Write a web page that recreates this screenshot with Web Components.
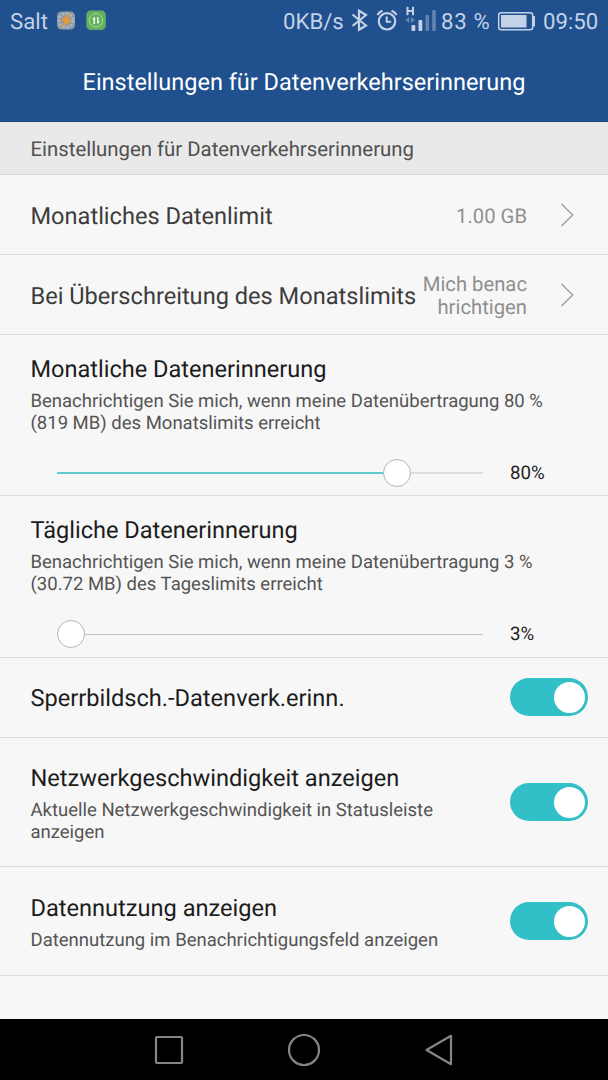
<!doctype html>
<html lang="de">
<head>
  <meta charset="UTF-8">
  <meta name="viewport" content="width=device-width, initial-scale=1.0">
  <title>Einstellungen für Datenverkehrserinnerung</title>
  <style>
    body {
      margin: 0;
      background: #f7f7f7;
      font-family: Roboto, "Liberation Sans", sans-serif;
      text-rendering: geometricPrecision;
    }
  </style>
</head>
<body>
<template id="settings-screen">
  <style>
    :host {
      display: flex;
      flex-direction: column;
      height: 1080px;
      overflow: hidden;
    }
    header {
      box-sizing: border-box;
      height: 122px;
      background: #20508e;
      border-bottom: 1px solid #174682;
    }
    main {
      flex: 1;
    }
  </style>
  <header><slot name="header"></slot></header>
  <main><slot></slot></main>
  <slot name="nav"></slot>
</template>

<template id="status-bar">
  <style>
    :host {
      display: flex;
      box-sizing: border-box;
      height: 42px;
      padding: 0 10px;
      align-items: center;
      justify-content: space-between;
      color: #c3d2e6;
      font-size: 22.2px;
      line-height: 42px;
      white-space: nowrap;
    }
    div {
      display: flex;
      align-items: center;
    }
    span {
      padding-top: 2px;
    }
    svg {
      display: block;
      flex: none;
    }
    .carrier {
      width: 46px;
    }
    .speed {
      width: 68px;
    }
    .level {
      width: 56px;
      letter-spacing: .7px;
    }
    .time {
      width: 55px;
    }
  </style>
  <div>
    <span class="carrier"><slot name="carrier"></slot></span>
    <svg width="52" height="42" viewBox="56 0 52 42">
      <rect x="57" y="11.5" width="18" height="18" rx="4.5" fill="#929aa1"/>
      <circle cx="66" cy="20.5" r="7" fill="none" stroke="#9dbbd0" stroke-width="2.6" stroke-dasharray="2.5 1.6"/>
      <circle cx="66" cy="20.5" r="4.5" fill="#9b9a93"/>
      <path d="M71.5 12.5 60.5 20.3l4.500 1.200-4.800 6.800L72.500 20.200l-4.600-1.200z" fill="#e29b3c"/>
      <rect x="86.3" y="10.5" width="19.5" height="19.5" rx="4.5" fill="#62b15c"/>
      <circle cx="96" cy="20.3" r="6.7" fill="none" stroke="#a9d5a9"/>
      <path d="M94.3 24v-5.5M97.8 17v5.5" stroke="#eef8ee" stroke-width="1.5"/>
      <path d="M92.2 19.5l2.100-3 1.200 3zM96.900 21.200h3l-2.100 3z" fill="#eef8ee"/>
    </svg>
  </div>
  <div>
    <span class="speed"><slot name="speed"></slot></span>
    <svg width="90" height="42" viewBox="351 0 90 42">
      <g fill="none" stroke="#c3d2e6" stroke-width="2.2">
        <path d="M352.5 14.5 366 25.5l-7 4.300V10.700l7 4.300-13.500 11"/>
        <circle cx="387" cy="21.3" r="8.2"/>
        <path d="M386.7 16.5v5.300h4.500" stroke-width="2"/>
        <path d="M377.5 15q1.500-3.200 5-4.300M396.500 15q-1.500-3.200-5-4.300"/>
        <path d="M407.5 6.7v8.600M413 6.700v8.600M407.500 11h5.500" stroke-width="2"/>
      </g>
      <path d="M409.3 17v6l-4-3zM411 17v6l4-3z" fill="#6687b2"/>
      <g fill="#c3d2e6">
        <rect x="411.5" y="25" width="3.8" height="6" rx="1"/>
        <rect x="418.5" y="20" width="3.8" height="11" rx="1"/>
      </g>
      <g fill="#6284b0">
        <rect x="425.5" y="15" width="3.6" height="16" rx="1"/>
        <rect x="432.2" y="10" width="3.6" height="21" rx="1"/>
      </g>
    </svg>
    <span class="level"><slot name="level"></slot></span>
    <svg width="46" height="42" viewBox="497 0 46 42">
      <rect x="498.7" y="12.7" width="34" height="17" rx="2.5" fill="none" stroke="#c3d2e6" stroke-width="1.5"/>
      <rect x="501" y="15" width="25.5" height="12.5" fill="#c3d2e6"/>
      <path d="M533 16.5h1.500v9.500H533z" fill="#c3d2e6" stroke="#c3d2e6"/>
    </svg>
    <span class="time"><slot name="time"></slot></span>
  </div>
</template>

<template id="title-bar">
  <style>
    :host {
      display: flex;
      height: 79px;
      align-items: center;
      justify-content: center;
      color: #fff;
      font-size: 23.5px;
      white-space: nowrap;
    }
  </style>
  <slot></slot>
</template>

<template id="section-label">
  <style>
    :host {
      display: flex;
      box-sizing: border-box;
      height: 53px;
      padding: 2px 0 0 30.5px;
      align-items: center;
      background: #e9e9e9;
      border-bottom: 1px solid #dadada;
      color: #505050;
      font-size: 20.35px;
    }
  </style>
  <slot></slot>
</template>

<template id="link-row">
  <style>
    :host {
      display: flex;
      box-sizing: border-box;
      height: 80px;
      padding: 0 34px 0 30.5px;
      align-items: center;
      border-bottom: 1px solid #dcdcdc;
    }
    .title {
      flex: 1;
      padding-top: 2px;
      color: #3c3c3c;
      font-size: 23.6px;
      white-space: nowrap;
    }
    .value {
      padding-top: 3px;
      color: #8f8f8f;
      font-size: 20.25px;
      line-height: 23px;
      text-align: right;
      white-space: pre;
    }
    svg {
      display: block;
      margin-left: 33px;
    }
  </style>
  <div class="title"><slot></slot></div>
  <div class="value"><slot name="value"></slot></div>
  <svg width="14" height="24" viewBox="0 0 14 24" fill="none" stroke="#999" stroke-width="1.2">
    <path d="M1.5 1 12.800 12 1.500 23"/>
  </svg>
</template>

<template id="slider-row">
  <style>
    :host {
      display: block;
      box-sizing: border-box;
      height: var(--row-height, 161px);
      padding: 20px 30px 0 30.5px;
      border-bottom: 1px solid #dcdcdc;
    }
    .title {
      color: #1c1c1c;
      font-size: 23.55px;
      line-height: 28px;
    }
    .note {
      margin-top: 7px;
      color: #545454;
      font-size: 18.5px;
      line-height: 22px;
      white-space: pre;
    }
    .control {
      display: flex;
      height: 30px;
      margin: 24px 0 0 26.5px;
      align-items: center;
      color: #222;
      font-size: 18.7px;
    }
    .bar {
      display: flex;
      width: 426px;
      margin-right: 27px;
      align-items: center;
    }
    .fill, .rest {
      height: 2px;
    }
    .fill {
      background: #5fcbce;
    }
    .rest {
      flex: 1;
      height: var(--rest-size, 2px);
      background: var(--rest-color, #dedede);
    }
    .thumb {
      box-sizing: border-box;
      width: 28px;
      height: 28px;
      border: 1px solid #b5b5b5;
      border-radius: 50%;
      background: #fff;
    }
  </style>
  <div class="title"><slot></slot></div>
  <div class="note"><slot name="note"></slot></div>
  <div class="control">
    <div class="bar">
      <div class="fill"></div>
      <div class="thumb"></div>
      <div class="rest"></div>
    </div>
    <slot name="value"></slot>
  </div>
</template>

<template id="switch-row">
  <style>
    :host {
      display: flex;
      box-sizing: border-box;
      height: var(--row-height, 80px);
      padding: 0 20px 0 30.5px;
      align-items: center;
      justify-content: space-between;
      border-bottom: 1px solid #dcdcdc;
    }
    .text {
      padding-top: var(--text-drop, 2px);
    }
    .title {
      color: #1c1c1c;
      font-size: 23.6px;
      line-height: 28px;
    }
    .note {
      color: #545454;
      font-size: 18.5px;
      line-height: 22px;
      white-space: pre;
    }
    ::slotted([slot=note]) {
      display: block;
      margin-top: 7px;
    }
    .switch {
      display: flex;
      box-sizing: border-box;
      width: 78px;
      height: 38px;
      margin-bottom: var(--switch-lift, 0);
      padding-right: 3px;
      align-items: center;
      justify-content: flex-end;
      border-radius: 19px;
      background: #33bfc7;
    }
    .knob {
      width: 31px;
      height: 31px;
      border-radius: 50%;
      background: #fff;
    }
  </style>
  <div class="text">
    <div class="title"><slot></slot></div>
    <div class="note"><slot name="note"></slot></div>
  </div>
  <div class="switch"><div class="knob"></div></div>
</template>

<template id="nav-bar">
  <style>
    :host {
      display: grid;
      box-sizing: border-box;
      height: 61px;
      padding: 0 101px;
      grid-template-columns: repeat(3, 1fr);
      place-items: center;
      background: #000;
    }
    svg {
      display: block;
      fill: none;
      stroke: #858585;
      stroke-width: 2.2;
      stroke-linejoin: round;
    }
  </style>
  <svg width="34" height="34"><rect x="4" y="4" width="26" height="26" rx="1"/></svg>
  <svg width="34" height="34"><circle cx="17" cy="17" r="15"/></svg>
  <svg width="34" height="34"><path d="M4.5 17 29 2.800v28.400z"/></svg>
</template>

<settings-screen>
  <status-bar slot="header">
    <span slot="carrier">Salt</span>
    <span slot="speed">0KB/s</span>
    <span slot="level">83 %</span>
    <span slot="time">09:50</span>
  </status-bar>
  <title-bar slot="header">Einstellungen für Datenverkehrserinnerung</title-bar>
  <section-label>Einstellungen für Datenverkehrserinnerung</section-label>
  <link-row>Monatliches Datenlimit<span slot="value">1.00 GB</span></link-row>
  <link-row>Bei Überschreitung des Monatslimits<span slot="value">Mich benac
hrichtigen</span></link-row>
  <slider-row at="326">Monatliche Datenerinnerung<span slot="note">Benachrichtigen Sie mich, wenn meine Datenübertragung 80 %
(819 MB) des Monatslimits erreicht</span><span slot="value">80%</span></slider-row>
  <slider-row at="0" style="--row-height: 162px; --rest-size: 1px; --rest-color: #c4c4c4">Tägliche Datenerinnerung<span slot="note">Benachrichtigen Sie mich, wenn meine Datenübertragung 3 %
(30.72 MB) des Tageslimits erreicht</span><span slot="value">3%</span></slider-row>
  <switch-row style="--switch-lift: 1px; --text-drop: 1px">Sperrbildsch.-Datenverk.erinn.</switch-row>
  <switch-row style="--row-height: 129px">Netzwerkgeschwindigkeit anzeigen<span slot="note">Aktuelle Netzwerkgeschwindigkeit in Statusleiste
anzeigen</span></switch-row>
  <switch-row style="--row-height: 109px">Datennutzung anzeigen<span slot="note">Datennutzung im Benachrichtigungsfeld anzeigen</span></switch-row>
  <nav-bar slot="nav"></nav-bar>
</settings-screen>

<script>
  class TemplateElement extends HTMLElement {
    constructor() {
      super()
      const template = document.querySelector(`template#${this.localName}`)
      this.attachShadow({mode: 'open'})
      this.shadowRoot.appendChild(template.content.cloneNode(true))
    }
  }

  class SliderRow extends TemplateElement {
    connectedCallback() {
      // left edge of the thumb, in px along the bar
      this.shadowRoot.querySelector('.fill').style.width = `${this.getAttribute('at')}px`
    }
  }

  customElements.define('settings-screen', class extends TemplateElement {})
  customElements.define('status-bar', class extends TemplateElement {})
  customElements.define('title-bar', class extends TemplateElement {})
  customElements.define('section-label', class extends TemplateElement {})
  customElements.define('link-row', class extends TemplateElement {})
  customElements.define('slider-row', SliderRow)
  customElements.define('switch-row', class extends TemplateElement {})
  customElements.define('nav-bar', class extends TemplateElement {})
</script>
</body>
</html>
